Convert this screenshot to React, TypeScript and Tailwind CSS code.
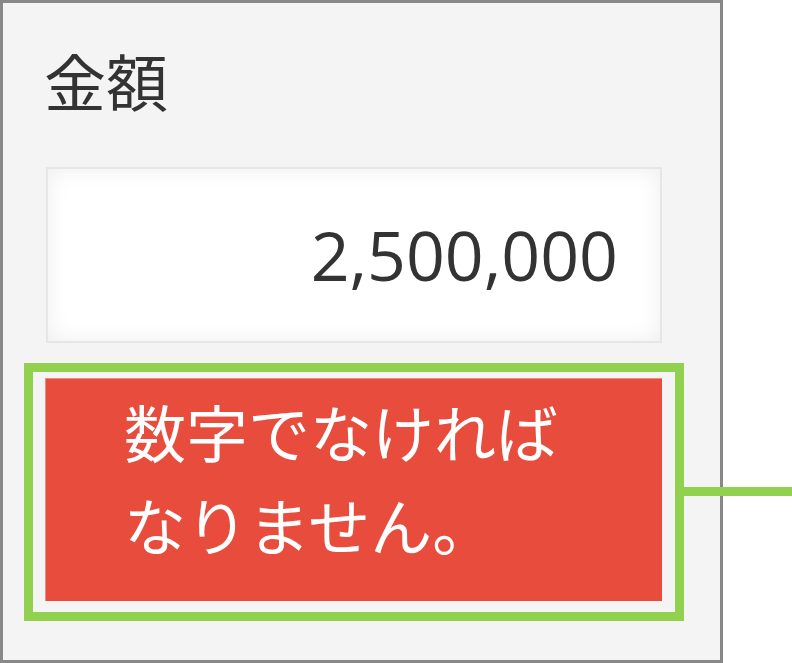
import React from "react";

const jp = { fontFamily: '"Noto Sans CJK JP", "Noto Sans", sans-serif' };
const num = { fontFamily: '"Open Sans", "Noto Sans", sans-serif' };

export default function App() {
  return (
    <div className="relative w-[792px] h-[663px] bg-white overflow-hidden">
      {/* form panel */}
      <div className="w-[723px] h-[663px] border-[3px] border-[#888888] bg-[#f4f4f4] pl-[41px] pt-[37px] box-border">
        <div className="text-[62px] leading-[80px] text-[#333333]" style={jp}>
          金額
        </div>
        <div className="mt-[47px] ml-[2px] w-[616px] h-[176px] border-2 border-[#e3e7e8] bg-white shadow-[inset_0_0_22px_rgba(0,0,0,0.07)] flex items-center justify-end pr-[42px] box-border">
          <span className="text-[68px] leading-none text-[#333333]" style={num}>
            2,500,000
          </span>
        </div>
        <div className="mt-[35px] ml-[1px] w-[617px] h-[223px] bg-[#e74c3c] border-t border-l border-[#ee8a80] pl-[78px] pt-[6px] box-border">
          <p className="text-[62px] leading-[93px] text-white" style={jp}>
            数字でなければ
            <br />
            なりません。
          </p>
        </div>
      </div>

      {/* callout frame around the error message */}
      <div className="absolute left-[24px] top-[363px] w-[660px] h-[258px] border-[9px] border-[#92d050] box-border" />
      <div className="absolute left-[684px] top-[487px] w-[108px] h-[9px] bg-[#92d050]" />
    </div>
  );
}
